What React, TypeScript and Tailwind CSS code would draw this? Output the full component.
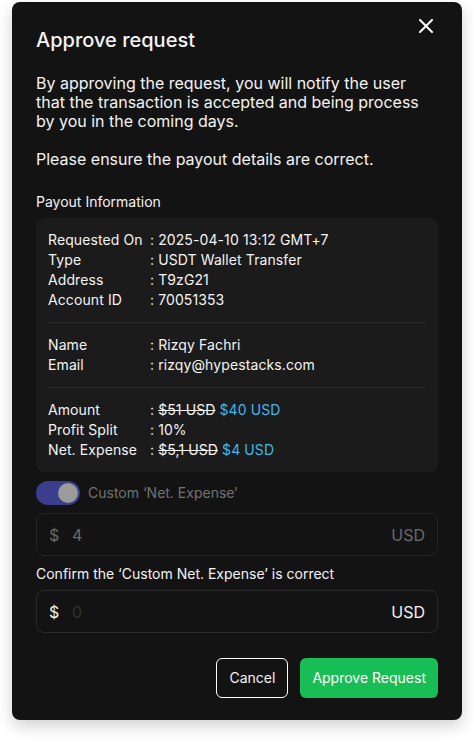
import { useState } from "react";

type Row = { label: string; value: React.ReactNode };

function InfoRows({ rows }: { rows: Row[] }) {
  return (
    <div>
      {rows.map((row) => (
        <div key={row.label} className="flex h-5 items-center text-sm leading-5 tracking-[0.1px]">
          <span className="w-[102px] shrink-0">{row.label}</span>
          <span className="pr-1">:</span>
          <span>{row.value}</span>
        </div>
      ))}
    </div>
  );
}

function Divider() {
  return <div className="my-3 h-px bg-[#2c2c2c]" />;
}

function Price({ old, now }: { old: string; now: string }) {
  return (
    <>
      <span className="line-through decoration-1">{old}</span>{" "}
      <span className="text-[#3fb8ec]">{now}</span>
    </>
  );
}

export default function App() {
  const [custom, setCustom] = useState(true);
  const [confirm, setConfirm] = useState("");

  return (
    <div
      className="min-h-[744px] bg-white pt-[2px]"
      style={{ fontFamily: "Inter, 'Noto Sans', sans-serif" }}
    >
      <div className="relative mx-3 h-[718px] w-[450px] rounded-lg bg-[#131313] px-6 pt-6 text-[#f4f4f4] shadow-[0_6px_16px_rgba(0,0,0,0.18)]">
        <button className="absolute right-[27px] top-[15px] p-0.5 text-white">
          <svg width="14" height="14" viewBox="0 0 14 14" fill="none">
            <path
              d="M1 1L13 13M13 1L1 13"
              stroke="currentColor"
              strokeWidth="2"
              strokeLinecap="round"
            />
          </svg>
        </button>

        <h1 className="text-xl leading-7 font-medium">Approve request</h1>

        <p className="mt-5 text-base leading-[19px]">
          By approving the request, you will notify the user that the transaction is
          accepted and being process by you in the coming days.
        </p>
        <p className="mt-[19px] text-base leading-[19px]">
          Please ensure the payout details are correct.
        </p>

        <h2 className="mt-[23px] text-sm leading-5">Payout Information</h2>

        <div className="mt-1.5 rounded-lg bg-[#1b1b1b] px-3 py-3">
          <InfoRows
            rows={[
              { label: "Requested On", value: "2025-04-10 13:12 GMT+7" },
              { label: "Type", value: "USDT Wallet Transfer" },
              { label: "Address", value: "T9zG21" },
              { label: "Account ID", value: "70051353" },
            ]}
          />
          <Divider />
          <InfoRows
            rows={[
              { label: "Name", value: "Rizqy Fachri" },
              { label: "Email", value: "rizqy@hypestacks.com" },
            ]}
          />
          <Divider />
          <InfoRows
            rows={[
              { label: "Amount", value: <Price old="$51 USD" now="$40 USD" /> },
              { label: "Profit Split", value: "10%" },
              { label: "Net. Expense", value: <Price old="$5,1 USD" now="$4 USD" /> },
            ]}
          />
        </div>

        <div className="mt-[9px] flex items-center gap-2">
          <button
            onClick={() => setCustom(!custom)}
            className={`flex h-6 w-11 items-center rounded-full p-0.5 ${
              custom ? "justify-end bg-[#3a3e8c]" : "justify-start bg-[#333]"
            }`}
          >
            <span className="h-5 w-5 rounded-full bg-[#9b9b9b]" />
          </button>
          <span className="text-sm text-[#727272]">Custom ‘Net. Expense’</span>
        </div>

        <div className="mt-2 flex h-[43px] items-center rounded-lg border border-[#242424] px-3 text-base text-[#6a6a6a]">
          <span className="w-[23px]">$</span>
          <span className="flex-1">4</span>
          <span>USD</span>
        </div>

        <p className="mt-2 text-sm leading-5">Confirm the ‘Custom Net. Expense’ is correct</p>

        <div className="mt-1.5 flex h-[43px] items-center rounded-lg border border-[#2a2a2a] px-3 text-base">
          <span className="w-[23px]">$</span>
          <input
            value={confirm}
            onChange={(e) => setConfirm(e.target.value)}
            placeholder="0"
            className="min-w-0 flex-1 bg-transparent outline-none placeholder:text-[#333]"
          />
          <span>USD</span>
        </div>

        <div className="mt-[25px] flex justify-end gap-3">
          <button className="h-10 rounded-md border border-white px-3 text-sm">Cancel</button>
          <button className="h-10 rounded-md bg-[#19bd55] px-3 text-sm text-white">
            Approve Request
          </button>
        </div>
      </div>
    </div>
  );
}
